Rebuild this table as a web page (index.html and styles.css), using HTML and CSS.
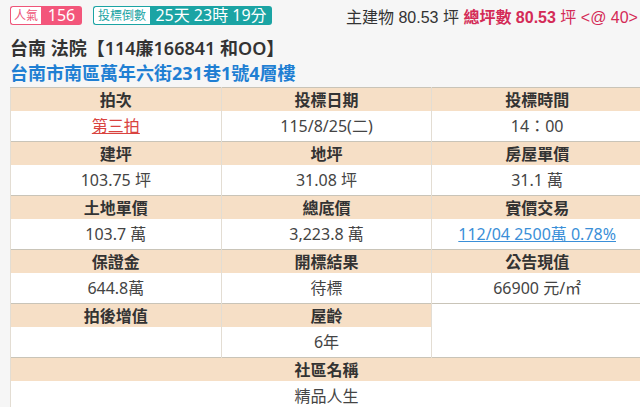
FILE: index.html
```html
<!DOCTYPE html>
<html lang="zh-Hant">
<head>
<meta charset="utf-8">
<title>台南 法院</title>
<link rel="stylesheet" href="styles.css">
</head>
<body>
<div class="page">
  <div class="topbar">
    <div class="badges">
      <span class="badge badge-pink"><span class="badge-label">人氣</span><span class="badge-value">156</span></span>
      <span class="badge badge-teal"><span class="badge-label">投標倒數</span><span class="badge-value">25天 23時 19分</span></span>
    </div>
    <div class="area">主建物 80.53 坪 <b class="hl">總坪數 80.53</b><span class="hl"> 坪 &lt;@ 40&gt;</span></div>
  </div>
  <h1 class="title">台南 法院【114廉166841 和OO】</h1>
  <h2 class="address">台南市南區萬年六街231巷1號4層樓</h2>
  <table class="info">
    <colgroup><col><col><col></colgroup>
    <tr class="head"><th>拍次</th><th>投標日期</th><th>投標時間</th></tr>
    <tr class="data"><td><a class="link-red" href="#">第三拍</a></td><td>115/8/25(二)</td><td>14：00</td></tr>
    <tr class="head"><th>建坪</th><th>地坪</th><th>房屋單價</th></tr>
    <tr class="data"><td>103.75 坪</td><td>31.08 坪</td><td>31.1 萬</td></tr>
    <tr class="head"><th>土地單價</th><th>總底價</th><th>實價交易</th></tr>
    <tr class="data"><td>103.7 萬</td><td>3,223.8 萬</td><td><a class="link-blue" href="#">112/04 2500萬 0.78%</a></td></tr>
    <tr class="head"><th>保證金</th><th>開標結果</th><th>公告現值</th></tr>
    <tr class="data"><td>644.8萬</td><td>待標</td><td>66900 元/㎡</td></tr>
    <tr class="head"><th>拍後增值</th><th>屋齡</th><td class="blank" rowspan="2"></td></tr>
    <tr class="data"><td></td><td>6年</td></tr>
    <tr class="head"><th colspan="3">社區名稱</th></tr>
    <tr class="data"><td colspan="3">精品人生</td></tr>
  </table>
</div>
</body>
</html>
```

FILE: styles.css
```css
html, body {
  margin: 0;
  padding: 0;
  background: #f6f6f6;
  overflow: hidden;
}
body {
  width: 640px;
  height: 407px;
  font-family: "Noto Sans", "Noto Sans CJK TC", sans-serif;
  color: #333;
}
.page {
  padding-left: 10px;
}
.topbar {
  display: flex;
  align-items: center;
  height: 29px;
  padding-top: 1px;
  white-space: nowrap;
}
.badges {
  display: flex;
  gap: 11px;
  width: 336px;
  flex: none;
}
.badge {
  display: inline-flex;
  height: 19px;
  line-height: 17px;
  border-radius: 3px;
  box-sizing: border-box;
}
.badge-label {
  display: flex;
  align-items: center;
  justify-content: center;
  box-sizing: border-box;
  background: #fff;
  font-size: 12px;
  border: 1px solid;
  border-right: none;
  border-radius: 3px 0 0 3px;
}
.badge-value {
  display: flex;
  align-items: center;
  justify-content: center;
  color: #fff;
  font-size: 16px;
  border-radius: 0 3px 3px 0;
}
.badge-pink .badge-label { color: #ee5579; border-color: #ee5579; width: 31px; }
.badge-pink .badge-value { background: #f3567b; width: 41px; }
.badge-teal .badge-label { color: #1ba4a4; border-color: #1ba4a4; width: 57px; }
.badge-teal .badge-value { background: #1ba4a4; width: 122px; }
.area {
  font-family: "Liberation Sans", "Noto Sans CJK TC", sans-serif;
  font-size: 16px;
  color: #333;
}
.hl {
  color: #d42b57;
}
.area b.hl {
  font-weight: bold;
}
.title {
  margin: 6px 0 0;
  font-size: 18px;
  line-height: 25px;
  font-weight: 600;
  color: #333;
}
.address {
  margin: 0;
  font-size: 18px;
  line-height: 25px;
  font-weight: bold;
  color: #1f7fd3;
  height: 26px;
}
.info {
  width: 633px;
  table-layout: fixed;
  border-collapse: collapse;
  border: 1px solid #99927f;
  background: #fff;
  font-size: 16px;
}
.info th, .info td {
  text-align: center;
  padding: 0;
  border-left: 1px solid #e3ddd3;
  border-right: 1px solid #e3ddd3;
  line-height: 20px;
}
.info tr.head th {
  background: #f6dfc6;
  height: 23px;
  font-weight: 600;
  color: #333;
  border-top: 1px solid #c9c4b8;
}
.info tr.data td {
  height: 30px;
  color: #444;
  font-weight: normal;
}
.info td.blank {
  background: #fff;
  border-top: 1px solid #c9c4b8;
}
.link-red {
  color: #d9433f;
  text-decoration: underline;
}
.link-blue {
  color: #3a8fd8;
  text-decoration: underline;
}
```
